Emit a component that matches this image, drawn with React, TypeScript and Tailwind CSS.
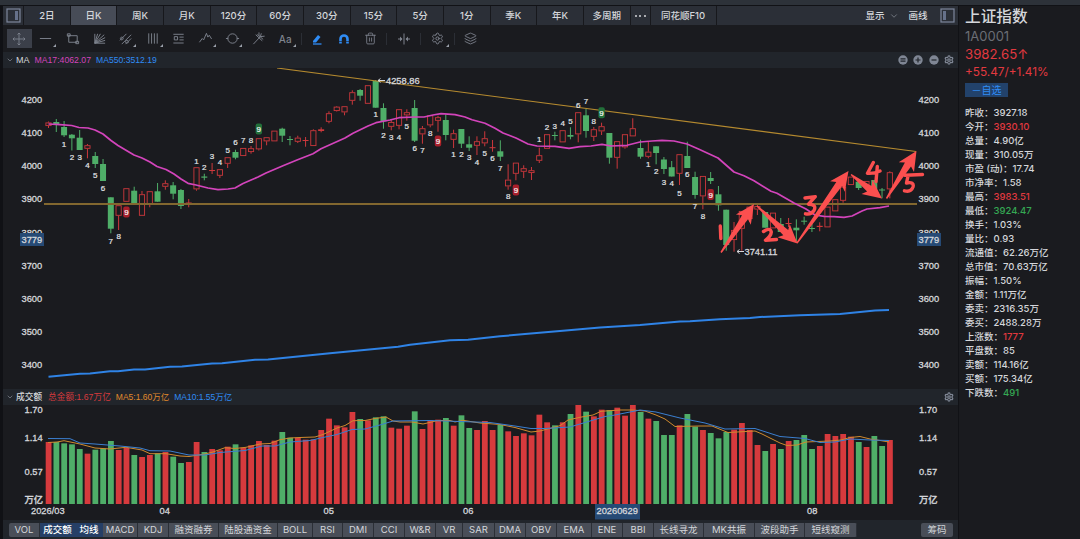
import React from 'react';
import { ChevronDown, Settings, Layers, Trash2 } from 'lucide-react';

type Side = 'r' | 'g';
// side, body top, body bottom, high, low
type Bar = [Side, number, number, number, number];

const STEP = 7.79;
const START = 48.5;
const RED = '#d63a3d';
const GREEN = '#4fae68';

const barX = (i: number) => START + STEP * i;

const CANDLES: Bar[] = [
  ['r', 122.5, 126, 121.5, 128], ['g', 122, 124.5, 119, 132], ['g', 127, 135.3, 121, 137], ['g', 134.7, 138.3, 134, 150.5],
  ['g', 137.7, 150, 130, 150], ['r', 145.3, 148.7, 144, 158.3], ['g', 156, 164, 152, 168], ['g', 164, 181, 159, 181],
  ['g', 197.3, 228.7, 197.3, 233.3], ['r', 205.3, 215.7, 205.3, 230], ['r', 188.3, 201.7, 188.3, 201.7], ['g', 190.7, 203, 186.7, 205],
  ['r', 194.3, 215.7, 191, 215.7], ['r', 191.3, 204, 191.3, 207.3], ['g', 191.3, 201.7, 183, 201.7], ['r', 183.3, 186.7, 180.3, 189.7],
  ['g', 185.3, 193.7, 182, 199.3], ['g', 190, 206, 189, 209], ['r', 202.5, 204, 199, 207.3], ['r', 167.3, 189.3, 167.3, 190.7],
  ['g', 176.5, 177.7, 173.7, 180.3], ['r', 170, 171, 163, 174], ['r', 169.3, 175.7, 169.3, 178], ['r', 157.3, 163.7, 157.3, 168],
  ['g', 152, 157.7, 149.7, 159.3], ['r', 148, 156, 148, 156], ['r', 148.3, 152, 146, 153.7], ['r', 138.3, 149.3, 138.3, 150.5],
  ['r', 137.3, 141.3, 137.3, 145.3], ['r', 130.7, 141.3, 130.7, 141.3], ['g', 128.7, 135.7, 127.7, 142], ['g', 139, 140, 136, 145.3],
  ['r', 137.7, 141.7, 135.7, 143], ['r', 140, 141, 137, 146.7], ['r', 130.3, 146, 129.3, 146], ['r', 129.3, 131, 127.3, 132.3],
  ['r', 113.3, 121.7, 111.3, 123.3], ['r', 106.7, 111, 106, 111.5], ['r', 106.3, 112.3, 106.3, 115.3], ['r', 92.3, 100.7, 90.3, 104.7],
  ['g', 90, 95.7, 89, 100.7], ['r', 85.3, 103.7, 85.3, 103.7], ['g', 81, 107.7, 80, 107.7], ['g', 108, 121.3, 103.3, 128.7],
  ['r', 122, 126.7, 119, 130.3], ['r', 109.3, 125.7, 109.3, 129.3], ['r', 112.3, 115.3, 109.3, 120.7], ['g', 108, 140.7, 100, 142],
  ['r', 128.3, 134.3, 126, 143.7], ['r', 115.3, 125.3, 115.3, 127.3], ['r', 117.3, 120.7, 115.7, 131.7], ['g', 120, 135, 114.3, 140.3],
  ['r', 133.3, 139.7, 129.7, 148], ['g', 129, 143.7, 129, 148], ['g', 144.3, 147.7, 136.3, 151], ['r', 141.3, 145.7, 136.3, 155],
  ['r', 138.3, 143.3, 131.3, 146.3], ['r', 147.2, 148.2, 140, 151.7], ['g', 151.3, 156.7, 140.3, 161], ['r', 179.7, 186.3, 164.3, 189.7],
  ['r', 162.7, 173.7, 162.7, 180.3], ['r', 168.3, 171.7, 165.3, 178], ['r', 170.3, 173, 167, 180], ['r', 155.3, 160.7, 147.7, 163],
  ['r', 134.3, 148.7, 134.3, 148.7], ['g', 135, 136, 131.7, 140.3], ['r', 130.3, 142.3, 130.3, 142.3], ['g', 135, 136.7, 127.3, 139.3],
  ['r', 112.3, 134.3, 112.3, 142.3], ['g', 115.3, 131, 109, 137.7], ['r', 129.3, 136.7, 127, 141], ['r', 126.3, 131.3, 122.7, 135],
  ['g', 133, 157.7, 133, 163.7], ['r', 141.3, 157.7, 141.3, 168.7], ['r', 134.3, 147.3, 134.3, 148.7], ['r', 128.3, 136.3, 118.3, 136.3],
  ['g', 148, 156.7, 139.7, 158.7], ['r', 151.7, 156.7, 141.7, 158.3], ['g', 146.3, 153, 146.3, 164.3], ['g', 159.5, 169, 157, 174],
  ['g', 167.2, 176.5, 161, 176.5], ['r', 154.3, 173.7, 154.3, 185], ['g', 156, 168, 141.7, 168], ['g', 177, 195, 171.7, 198.7],
  ['r', 176, 196.3, 176, 209.3], ['g', 178, 181, 172, 184], ['g', 194.3, 205.3, 186, 210.7], ['g', 209.7, 245, 209.7, 250.7],
  ['r', 230, 240, 222, 251.7], ['r', 211, 228.7, 211, 250.7], ['r', 206.7, 219, 206.7, 222], ['r', 206, 209.5, 204, 215],
  ['g', 212, 227.7, 212, 227.7], ['r', 212.7, 228.3, 212.7, 228.3], ['g', 224, 232, 218, 232], ['r', 223, 224, 218, 227],
  ['g', 227.7, 230.3, 219.3, 241.7], ['g', 220.7, 221.7, 216.7, 224.7], ['g', 228, 229, 224, 232], ['r', 225.8, 227, 222.3, 231.3],
  ['r', 206.7, 227.3, 206.7, 227.3], ['r', 199.3, 211.3, 199.3, 211.3], ['r', 186.7, 200.7, 186.7, 202.7], ['r', 176.7, 185, 176.7, 185],
  ['g', 181.7, 188, 181.7, 190], ['r', 181, 187, 181, 190], ['g', 180, 189.3, 180, 191], ['g', 189.5, 190.5, 188, 198.3],
  ['r', 172.3, 189.3, 171.3, 198.3],
];

const VOLUMES = [
  171, 171, 175, 178, 192, 206, 194, 190, 168, 195, 189, 210, 216, 210, 205, 201, 215, 234, 231, 171, 201, 192, 196, 185, 178,
  188, 181, 168, 180, 167, 141, 158, 158, 164, 163, 135, 101, 121, 127, 81, 102, 106, 97, 94, 128, 131, 122, 79, 132, 106,
  104, 99, 122, 91, 129, 135, 108, 135, 120, 139, 153, 145, 151, 89, 112, 121, 112, 87, 60, 80, 94, 74, 75, 68, 92,
  60, 81, 101, 108, 150, 150, 121, 87, 125, 135, 144, 160, 141, 134, 114, 135, 180, 198, 177, 192, 168, 165, 150, 192, 183,
  147, 153, 147, 155, 171, 186, 153, 183, 165,
];
const GREEN_VOLUMES = new Set([
  1, 2, 3, 4, 6, 7, 8, 11, 14, 16, 17, 20, 24, 30, 31, 40, 42, 43, 47, 51, 53, 54, 58, 65, 67, 69, 72, 76, 78, 79, 80, 82, 83,
  85, 86, 87, 92, 94, 96, 97, 98, 104, 106, 107,
]);

// count label, bar index, y
const COUNTS: [string, number, number][] = [
  ['1', 2, 144], ['2', 3, 156.7], ['3', 4, 156.7], ['4', 5, 165.3], ['5', 6, 174.7], ['6', 7, 188], ['7', 8, 241], ['8', 9, 236],
  ['1', 19, 161], ['2', 20, 167], ['3', 21, 156], ['4', 22, 162], ['5', 23, 150.5], ['6', 24, 142.5], ['7', 25, 140.5], ['8', 26, 140.5],
  ['1', 42, 113.7], ['2', 43, 135.5], ['3', 44, 137], ['4', 45, 137], ['5', 46, 126], ['6', 47, 148], ['7', 48, 150.5], ['8', 49, 133.5],
  ['1', 52, 154], ['2', 53, 154], ['3', 54, 157.5], ['4', 55, 162], ['5', 56, 153], ['6', 57, 158.5], ['7', 58, 168], ['8', 59, 196],
  ['1', 63, 139.5], ['2', 64, 127.3], ['3', 65, 126], ['4', 66, 123.5], ['5', 67, 121.3], ['6', 68, 105.5], ['7', 69, 101.3], ['8', 70, 121.3],
  ['1', 77, 163.7], ['2', 78, 170.7], ['3', 79, 182.5], ['4', 80, 183], ['5', 81, 193], ['6', 82, 174.5], ['7', 83, 205.7], ['8', 84, 215.7],
];

const NINES: [Side, number, number][] = [
  ['r', 10, 212], ['g', 27, 129], ['r', 50, 141], ['r', 60, 190], ['g', 71, 112.7], ['r', 85, 194.5],
];

const MA17 =
  '48.5,124 60,124.7 71.7,125.5 79,127.5 88,128 95,130 103,134 111,140.5 118,145.5 134,155 142,158 150,162 157,166.5 166,169.5 174,174 181,179 188,183.3 196,185 208,188 218,189.7 228,189 235,188 243,183.5 258,177 266,173 283,165.7 297,160 313,153.7 321,148.7 345,138 353,133.3 368,126 376,122.7 390,120 399,117.7 415,117 424,117 433,115 441,113.7 455,114.7 465,117 472,119.7 485,123.3 495,128.3 503,133 516,138 528,144 537,146 555,146.3 569,148.3 580,146.7 591,146 602,144.3 611,146 627,145.3 640,142 652,141 662,140.3 674,141 687,144 699,149.3 718,158 734,172 744,175.7 754,180.7 771,191.3 777,193.3 794,203 806,209 815,215 824,216.3 834,216.7 844,217.3 852,216 862,211 867,209 880,207.7 889,206';
const MA550 =
  '48.5,376.7 80,373.7 90,373.5 110,371.3 118,371.3 134,369.5 145,369.5 170,366.7 182,366.5 212,363.4 222,363.2 255,359.7 268,359.5 330,353.3 398,346.7 410,344.7 450,340.3 468,339.7 500,336.3 525,334 560,331 600,327.5 640,325 680,321.5 690,321.3 720,319.3 750,318 760,317 800,315.3 840,314 860,312 875,310.5 889,310';
const VOL_MA5 =
  '48,442.5 57,442 64,440.7 80,444 95,448 110,449 126,447.3 142,450 150,453.7 166,453.7 180,456 189,456.5 205,454 213,452 225,447.7 235,448.5 246,447.3 260,444 270,443.5 280,439.7 290,438 300,437.5 315,437 323,434.5 337,428 345,425.5 353,420.7 365,420.5 375,418.5 386,417 393,421 400,422 412,422 423,424 438,420.5 450,420.5 455,422 463,420.3 480,423 500,424.5 515,427.5 531,432 540,431 560,425.7 568,420 580,417.3 593,415 601,411.3 620,410 632,410 645,411 656,415 665,419 675,426.5 700,426 712,426 728,432.5 755,431 762,434 770,438 780,443 787,445.5 797,445 806,442 830,441 841,440 850,437.5 860,436.5 870,439 880,440.5 889,442';
const VOL_MA10 =
  '48,438.5 70,438.7 80,443 95,444 120,446 140,448 150,450.7 170,451 189,455 205,455 220,452.5 245,450.5 262,446 275,446 290,442 310,440.5 323,437.5 337,434.5 352,429.5 365,429 380,425 393,421 430,420.5 460,421.5 490,422.5 515,426 531,428.5 545,428.5 570,427 585,422.5 605,416.5 615,415 630,412 640,410 656,412 680,418 705,423 725,429 755,428.5 780,436.5 805,438.5 820,442.5 835,442 850,439 870,440 889,440.5';

const ARROWS: [number, number, number, number][] = [
  [721, 252.5, 754, 204],
  [757, 206, 797.5, 243.5],
  [797, 243, 848.5, 171],
  [851, 174.5, 882, 198.5],
  [886.5, 198.5, 916.5, 151],
];

const PERIODS = ['2日', '日K', '周K', '月K', '120分', '60分', '30分', '15分', '5分', '1分', '季K', '年K', '多周期'];

const QUOTES: [string, string, string][] = [
  ['昨收：', '3927.18', ''],
  ['今开：', '3930.10', 'text-[#e2393f]'],
  ['总量：', '4.90亿', ''],
  ['现量：', '310.05万', ''],
  ['市盈 (动)：', '17.74', ''],
  ['市净率：', '1.58', ''],
  ['最高：', '3983.51', 'text-[#e2393f]'],
  ['最低：', '3924.47', 'text-[#35a853]'],
  ['换手：', '1.03%', ''],
  ['量比：', '0.93', ''],
  ['流通值：', '62.26万亿', ''],
  ['总市值：', '70.63万亿', ''],
  ['振幅：', '1.50%', ''],
  ['金额：', '1.11万亿', ''],
  ['委卖：', '2316.35万', ''],
  ['委买：', '2488.28万', ''],
  ['上涨数：', '1777', 'text-[#e2393f]'],
  ['平盘数：', '85', ''],
  ['卖额：', '114.16亿', ''],
  ['买额：', '175.34亿', ''],
  ['下跌数：', '491', 'text-[#35a853]'],
];

const INDICATORS: [string, string][] = [
  ['VOL', 'w-[31px]'], ['成交额', 'w-[36px]'], ['均线', 'w-[27px]'], ['MACD', 'w-[35px]'], ['KDJ', 'w-[31px]'],
  ['融资融券', 'w-[50px]'], ['陆股通资金', 'w-[59px]'], ['BOLL', 'w-[35px]'], ['RSI', 'w-[30px]'], ['DMI', 'w-[31px]'],
  ['CCI', 'w-[31px]'], ['W&R', 'w-[31px]'], ['VR', 'w-[27px]'], ['SAR', 'w-[32px]'], ['DMA', 'w-[31px]'],
  ['OBV', 'w-[31px]'], ['EMA', 'w-[35px]'], ['ENE', 'w-[31px]'], ['BBI', 'w-[31px]'], ['长线寻龙', 'w-[50px]'],
  ['MK共振', 'w-[51px]'], ['波段助手', 'w-[50px]'], ['短线窥测', 'w-[52px]'],
];

const TOOLS: { d: string; menu?: boolean }[] = [
  { d: 'M2 8h12', menu: true },
  { d: 'M4 4v8h9V5H4M2.5 3h3v2.5h-3zM11.5 11h3v2.5h-3z' },
  { d: 'M3 13V3M3 13l3-10M3 13L9 3M3 13l10-9M3 13l11-6M3 13l11-3M3 13h11' },
  { d: 'M2 10l7-7M4 14L14 4M8 14l6-6M4 6.5a1.5 1.5 0 1 0 .1 0M9.5 10a1.5 1.5 0 1 0 .1 0', menu: true },
  { d: 'M4 2.5v11M7 2.5v11M10 2.5v11M13 2.5v11', menu: true },
  { d: 'M2.5 3.5h11M2.5 12.8h11M9 6.5h4.5M9 9.5h4.5M3.500 6h3.500v3.500H3.500z' },
  { d: 'M1.5 12l3-4 1.5 1.500 3-7 1.500 4 1.500-2 2.500 4', menu: true },
  { d: 'M3 8a5 5 0 0 1 10 0a5 5 0 0 1-10 0M1 8h2.5M12.5 8H15', menu: true },
  { d: 'M2.5 14L10 6M5 4l7 6.500M6.500 3.500L9 6M8.500 1.500v3.500l4.500 4M11 2.500L10 6l4.500-.500' },
];

const arrowPoints = ([x1, y1, x2, y2]: [number, number, number, number]) => {
  const len = Math.hypot(x2 - x1, y2 - y1);
  const ux = (x2 - x1) / len;
  const uy = (y2 - y1) / len;
  const at = (along: number, side: number) =>
    `${(x1 + ux * along - uy * side).toFixed(1)},${(y1 + uy * along + ux * side).toFixed(1)}`;
  return [at(0, 0.7), at(len - 16, 3.6), at(len - 19, 9), at(len, 0), at(len - 19, -9), at(len - 16, -3.6), at(0, -0.7)].join(' ');
};

const Corner = () => (
  <svg className="absolute right-[3px] bottom-[5px] size-[3px]" viewBox="0 0 3 3">
    <path d="M3 0v3H0z" fill="#9aa0aa" />
  </svg>
);

const ToolCell = ({ children, menu }: { children: React.ReactNode; menu?: boolean }) => (
  <div className="relative flex h-full w-[26.6px] shrink-0 items-center justify-center text-[#7e838e]">
    {children}
    {menu && <Corner />}
  </div>
);

const Divider = () => <div className="mx-[2.25px] h-3 w-px shrink-0 bg-[#2b2e35]" />;

const PanelIcon = ({ right }: { right?: boolean }) => (
  <svg className="h-[15px] w-[15px]" viewBox="0 0 15 15" fill="none">
    <rect x="1" y="1" width="13" height="13" stroke="#7d879c" strokeWidth="1.2" />
    <rect x={right ? 9 : 3} y="3" width="3" height="9" fill="#66718a" />
  </svg>
);

const Candle = ({ bar, x }: { bar: Bar; x: number }) => {
  const [side, top, bottom, high, low] = bar;
  const color = side === 'r' ? '#cd383c' : GREEN;
  if (side === 'g' || bottom - top < 2) {
    return (
      <g fill={color}>
        <rect x={x - 0.5} y={high} width="1" height={low - high} />
        <rect x={x - 3} y={top} width="6" height={bottom - top} />
      </g>
    );
  }
  return (
    <g stroke={color} fill="none">
      <path d={`M${x} ${high}V${top}M${x} ${bottom}V${low}`} />
      <rect x={x - 2.6} y={top + 0.4} width="5.2" height={bottom - top - 0.8} strokeWidth="0.9" />
    </g>
  );
};

const AxisText = ({ x, y, children }: { x: number; y: number; children: React.ReactNode }) => (
  <text x={x} y={y} fontSize="9.3" fill="#d4d6da" stroke="#d4d6da" strokeWidth="0.3">{children}</text>
);

const PriceChart = () => (
  <svg
    className="block h-[321px] w-[955px] shrink-0 font-['Liberation_Sans','Noto_Sans_CJK_SC',sans-serif]"
    viewBox="3 68 955 321"
  >
    {[4200, 4100, 4000, 3900, 3800, 3700, 3600, 3500, 3400].map((price, i) => (
      <g key={price}>
        <AxisText x={21.5} y={103.3 + i * 33.05}>{price}</AxisText>
        <AxisText x={918.5} y={103.3 + i * 33.05}>{price}</AxisText>
      </g>
    ))}
    {[20, 917].map((x) => (
      <g key={x}>
        <rect x={x} y="233" width="24" height="13" fill="#264a75" />
        <AxisText x={x + 1.5} y={243}>3779</AxisText>
      </g>
    ))}

    {CANDLES.map((bar, i) => <Candle key={i} bar={bar} x={barX(i)} />)}

    <path d="M44 204H917" stroke="#82672f" strokeWidth="1.8" />
    <path d="M277 68L916 151.5" stroke="#b58a2f" strokeWidth="1.1" />
    <polyline points={MA17} fill="none" stroke="#d344bb" strokeWidth="1.7" strokeLinejoin="round" />
    <polyline points={MA550} fill="none" stroke="#2f83e6" strokeWidth="2" strokeLinejoin="round" />

    {COUNTS.map(([label, i, y]) => (
      <text key={i} x={barX(i)} y={y + 2.8} fontSize="8" textAnchor="middle" fill="#e4e5e8" stroke="#e4e5e8" strokeWidth="0.2">
        {label}
      </text>
    ))}
    {NINES.map(([side, i, y]) => (
      <g key={i}>
        <rect x={barX(i) - 3.2} y={y - 5.5} width="6.4" height="11" rx="2" fill={side === 'r' ? '#a81f2b' : '#22703a'} />
        <text x={barX(i)} y={y + 3} fontSize="8" textAnchor="middle" fill="#f3f3f3" stroke="#f3f3f3" strokeWidth="0.2">9</text>
      </g>
    ))}

    <path d="M378 80.5h7M380.5 78.5l-2.5 2 2.5 2M737 251.5h7M739.5 249.5l-2.5 2 2.5 2" stroke="#d4d6da" fill="none" />
    <AxisText x={386} y={83.7}>4258.86</AxisText>
    <AxisText x={744.5} y={255}>3741.11</AxisText>

    {ARROWS.map((arrow, i) => <polygon key={i} points={arrowPoints(arrow)} fill="#fb4f4f" />)}
    <path
      d="M720.3 226L720.8 238.500M763.5 231.5Q770 227 771.3 232Q771 236 765.5 240.3L776.5 239.5M805 198L815.300 196.700L808.5 204.2Q817 204.500 814 210.5Q811 215 805.5 213.8M873.3 162.500L867.500 173.300Q874 173.8 880 171M877.300 166.500L876 181.500M905 175.300L922.5 174.500M908 176L906.5 183Q914.500 181.500 913 187Q911 192.500 904.500 190.800"
      fill="none"
      stroke="#fb4f4f"
      strokeWidth="3.4"
      strokeLinecap="round"
      strokeLinejoin="round"
    />
  </svg>
);

const VolumeChart = () => (
  <svg
    className="block h-[115px] w-[955px] shrink-0 font-['Liberation_Sans','Noto_Sans_CJK_SC',sans-serif]"
    viewBox="3 405 955 115"
  >
    {VOLUMES.map((v, i) => (
      <rect
        key={i}
        x={barX(i) - 2.8}
        y={385 + v / 3}
        width="5.8"
        height={119 - v / 3}
        fill={GREEN_VOLUMES.has(i) ? GREEN : RED}
      />
    ))}
    <polyline points={VOL_MA5} fill="none" stroke="#d08a2e" strokeWidth="1" />
    <polyline points={VOL_MA10} fill="none" stroke="#3b7fd0" strokeWidth="1" />
    {[['1.70', 413], ['1.14', 441], ['0.57', 474.5], ['万亿', 502.5]].map(([label, y]) => (
      <g key={label}>
        <AxisText x={24.5} y={Number(y)}>{label}</AxisText>
        <AxisText x={919} y={Number(y)}>{label}</AxisText>
      </g>
    ))}
    <rect x="595" y="504" width="45" height="15.5" fill="#264a75" />
    <AxisText x={31} y={514}>2026/03</AxisText>
    <AxisText x={159.5} y={514}>04</AxisText>
    <AxisText x={323.5} y={514}>05</AxisText>
    <AxisText x={463} y={514}>06</AxisText>
    <AxisText x={596.5} y={514}>20260629</AxisText>
    <AxisText x={807} y={514}>08</AxisText>
  </svg>
);

const PeriodBar = () => (
  <div className="flex h-[19px] shrink-0 bg-[#2b2f37]">
    <div className="flex w-[21px] items-center justify-center border-r border-[#17181c]">
      <PanelIcon right />
    </div>
    {PERIODS.map((p) => (
      <div
        key={p}
        className={`flex w-[46.67px] shrink-0 items-center justify-center border-r border-[#17181c] ${p === '日K' ? 'bg-[#474c57]' : ''}`}
      >
        {p}
      </div>
    ))}
    <div className="flex w-5 items-center justify-center gap-[2.5px] border-r border-[#17181c]">
      {[0, 1, 2].map((n) => <span key={n} className="size-[2px] rounded-full bg-[#d4d6da]" />)}
    </div>
    <div className="flex w-[66px] items-center justify-center border-r border-[#17181c]">同花顺F10</div>
    <div className="flex flex-1 items-center justify-end pr-[3px]">
      <span>显示</span>
      <ChevronDown className="ml-[5px] size-[10px] text-[#7d828c]" />
      <span className="ml-[9px]">画线</span>
      <span className="ml-[12.5px]"><PanelIcon /></span>
    </div>
  </div>
);

const ToolBar = () => (
  <div className="flex h-[27px] shrink-0 items-center pl-[3px]">
    <ToolCell>
      <div className="flex h-[19px] w-[25px] items-center justify-center bg-[#3b3f49]">
        <svg className="size-[14px]" viewBox="0 0 14 14" fill="none" stroke="currentColor" strokeWidth="0.9">
          <path d="M7 1v12M1 7h12M5.5 2.5L7 1l1.5 1.5M5.5 11.5L7 13l1.5-1.5M2.5 5.5L1 7l1.5 1.5M11.5 5.5L13 7l-1.5 1.5" />
        </svg>
      </div>
    </ToolCell>
    {TOOLS.map((tool, i) => (
      <ToolCell key={i} menu={tool.menu}>
        <svg className="size-[15px]" viewBox="0 0 16 16" fill="none" stroke="currentColor" strokeWidth="1">
          <path d={tool.d} />
        </svg>
      </ToolCell>
    ))}
    <ToolCell menu><span className="text-[10px]">Aa</span></ToolCell>
    <Divider />
    <ToolCell>
      <svg className="size-[12px]" viewBox="0 0 12 12">
        <path d="M2 8L7 2l2.5 2L5 9.5H2z" fill="#2f8cf5" />
        <path d="M2 11h8.5" stroke="#2f8cf5" strokeWidth="1.3" />
      </svg>
    </ToolCell>
    <ToolCell>
      <svg className="size-[12px]" viewBox="0 0 12 12" fill="none">
        <path d="M2.5 10.5V6a3.5 3.5 0 0 1 7 0v4.5" stroke="#2f8cf5" strokeWidth="2.6" />
        <path d="M1 8.5h3.2M8 8.5h3.2" stroke="#1a1b1f" strokeWidth="0.6" />
      </svg>
    </ToolCell>
    <ToolCell><Trash2 className="size-[13px]" strokeWidth={1.6} /></ToolCell>
    <Divider />
    <div className="flex w-[28.5px] justify-center text-[#7e838e]">
      <svg className="size-[14px]" viewBox="0 0 14 14" fill="none" stroke="currentColor">
        <path d="M7 1.5v11" />
        <path d="M1 7h4M13 7H9" />
        <path d="M3 4.5L5.5 7 3 9.5zM11 4.5L8.5 7l2.5 2.5z" fill="currentColor" stroke="none" />
      </svg>
    </div>
    <Divider />
    <div className="relative flex w-[28.5px] justify-center text-[#7e838e]">
      <Settings className="size-[13px]" strokeWidth={1.8} />
      <svg className="absolute right-[3px] -bottom-0.5 size-[3px]" viewBox="0 0 3 3"><path d="M3 0v3H0z" fill="#9aa0aa" /></svg>
    </div>
    <Divider />
    <div className="flex w-[27px] justify-center text-[#7e838e]">
      <Layers className="size-[13px]" strokeWidth={1.6} />
    </div>
  </div>
);

const RoundIcon = ({ d }: { d: string }) => (
  <svg className="size-[10px]" viewBox="0 0 10 10">
    <circle cx="5" cy="5" r="4.7" fill="#7f8694" />
    <path d={d} stroke="#21252b" strokeWidth="1.2" />
  </svg>
);

const App: React.FC = () => {
  return (
    <div className="flex h-[539px] w-[1080px] flex-col overflow-hidden bg-[#1a1b1f] font-[Inter,'Noto_Sans_CJK_SC',sans-serif] text-[#d4d6da]">
      <div className="h-[5px] shrink-0 bg-[#2d3239]" />
      <div className="flex min-h-0 flex-1 border-t border-[#111216]">
        {/* Chart side */}
        <div className="flex w-[958px] shrink-0 flex-col border-l-[3px] border-[#101115] text-[9.5px] leading-none font-medium">
          <PeriodBar />
          <ToolBar />

          <div className="flex h-4 shrink-0 items-center bg-[#21252b] pr-1 pl-[3px] font-['Liberation_Sans',sans-serif] font-normal">
            <ChevronDown className="size-[8px] text-[#8a8f9a]" />
            <span className="ml-[2px] text-[9px]">MA</span>
            <span className="ml-[5px] text-[8.7px] text-[#d344bb]">MA17:4062.07</span>
            <span className="ml-[5px] text-[8.6px] text-[#2f8cf5]">MA550:3512.19</span>
            <div className="ml-auto flex gap-[5.5px]">
              <RoundIcon d="M2.5 3.9h5M2.5 6.2h5" />
              <RoundIcon d="M2.5 5h5M5 2.5v5" />
              <RoundIcon d="M2.5 5h5" />
              <Settings className="size-[10px] text-[#7f8694]" strokeWidth={3} />
            </div>
          </div>

          <PriceChart />

          <div className="flex h-4 shrink-0 items-center bg-[#21252b] pr-1 pl-[3px] font-['Liberation_Sans','Noto_Sans_CJK_SC',sans-serif] text-[8.5px] font-normal">
            <ChevronDown className="size-[8px] text-[#8a8f9a]" />
            <span className="ml-[2px] text-[8.7px] font-medium">成交额</span>
            <span className="ml-[6px] text-[8.7px] text-[#d63a3d]">总金额:1.67万亿</span>
            <span className="ml-[5px] text-[#e08a2c]">MA5:1.60万亿</span>
            <span className="ml-[5px] text-[#2f8cf5]">MA10:1.55万亿</span>
            <Settings className="ml-auto size-[10px] text-[#7f8694]" strokeWidth={3} />
          </div>

          <VolumeChart />

          <div className="flex flex-1 items-center bg-[#21252b] pr-[5px] pl-[6px] font-normal">
            <div className="flex h-[14px] overflow-hidden rounded-[2px]">
              {INDICATORS.map(([name, width]) => (
                <div
                  key={name}
                  className={`flex shrink-0 items-center justify-center border-r text-[9.5px] whitespace-nowrap ${width} ${
                    name === '成交额' || name === '均线' ? 'border-[#263f66] bg-[#263f66] font-medium text-white' : 'border-[#2b2f36] bg-[#494e58]'
                  }`}
                >
                  {name}
                </div>
              ))}
            </div>
            <div className="ml-auto flex h-[14px] w-8 items-center justify-center rounded-[2px] bg-[#494e58]">筹码</div>
          </div>
        </div>

        {/* Quote side */}
        <div className="flex min-w-0 flex-1 flex-col border-l border-[#111216] pt-[2px] pl-[6px] leading-none">
          <div className="h-[19px] text-[15.7px] leading-[18px] font-medium">上证指数</div>
          <div className="h-[18px] text-[13px] leading-[18px] text-[#6b6e75]">1A0001</div>
          <div className="h-[18px] text-[13.2px] leading-[18px] text-[#e2393f]">3982.65↑</div>
          <div className="h-[18px] text-[11.8px] leading-[18px] text-[#e2393f]">+55.47/+1.41%</div>
          <div className="mt-[2px] flex h-[14px] w-[43px] items-center justify-center bg-[#22426b] text-[10px] text-[#2f8cf5]">
            －自选
          </div>
          <div className="mt-[9px] flex flex-col text-[9.5px] font-medium">
            {QUOTES.map(([label, value, tone]) => (
              <div key={label} className="flex h-[14px] items-center whitespace-nowrap">
                <span>{label}</span>
                <span className={tone}>{value}</span>
              </div>
            ))}
          </div>
        </div>
      </div>
    </div>
  );
};

export default App;
